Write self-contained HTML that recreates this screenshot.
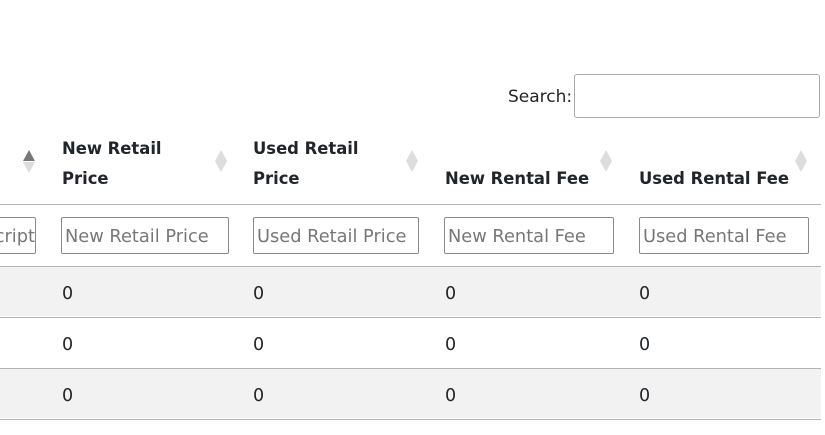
<!DOCTYPE html>
<html><head><meta charset="utf-8"><style>
body{margin:0;width:825px;height:435px;background:#fff;position:relative;overflow:hidden;font-family:"DejaVu Sans","Liberation Sans",sans-serif;color:#212529}
.a{position:absolute}
.lbl{left:508px;top:87px;font-size:17px}
.sbox{left:574px;top:74px;width:244px;height:42px;border:1px solid #aaa;border-radius:3px}
.h{font-weight:bold;font-size:16.4px;line-height:30px}
.line{left:0;width:821px;height:1px;background:#b4b4b4}
.row{left:0;width:821px;height:50px;background:#f2f2f2}
.inp{top:217px;border:1px solid #8a8a8a;border-radius:2px;font-size:17.8px;color:#777;line-height:37px;padding-left:3px;box-sizing:border-box;height:37px;overflow:hidden;white-space:nowrap}
.z{font-size:17.5px}
</style></head><body>
<div class="a lbl">Search:</div>
<div class="a sbox"></div>

<div class="a h" style="left:62px;top:134px">New Retail<br>Price</div>
<div class="a h" style="left:253px;top:134px">Used Retail<br>Price</div>
<div class="a h" style="left:445px;top:164px">New Rental Fee</div>
<div class="a h" style="left:639px;top:164px">Used Rental Fee</div>

<svg class="a" style="left:0;top:0" width="825" height="435">
<polygon points="29,150 35,161 23,161" fill="#777"/>
<polygon points="23,162 35,162 29,173" fill="#ddd"/>
<g fill="#ddd">
<polygon points="221,150 227,161 221,172 215,161"/>
<polygon points="412,150 418,161 412,172 406,161"/>
<polygon points="606,150 612,161 606,172 600,161"/>
<polygon points="801,150 807,161 801,172 795,161"/>
</g>
</svg>

<div class="a line" style="top:204px"></div>
<div class="a inp" style="left:-10px;width:46px;padding-left:0;text-align:right">cript</div>
<div class="a inp" style="left:61px;width:168px">New Retail Price</div>
<div class="a inp" style="left:253px;width:166px">Used Retail Price</div>
<div class="a inp" style="left:444px;width:170px">New Rental Fee</div>
<div class="a inp" style="left:639px;width:170px">Used Rental Fee</div>

<div class="a row" style="top:266px"></div>
<div class="a row" style="top:368px"></div>
<div class="a line" style="top:266px"></div>
<div class="a line" style="top:317px"></div>
<div class="a line" style="top:368px"></div>
<div class="a line" style="top:419px"></div>

<div class="a z" style="left:62px;top:284px">0</div><div class="a z" style="left:253px;top:284px">0</div><div class="a z" style="left:445px;top:284px">0</div><div class="a z" style="left:639px;top:284px">0</div>
<div class="a z" style="left:62px;top:335px">0</div><div class="a z" style="left:253px;top:335px">0</div><div class="a z" style="left:445px;top:335px">0</div><div class="a z" style="left:639px;top:335px">0</div>
<div class="a z" style="left:62px;top:386px">0</div><div class="a z" style="left:253px;top:386px">0</div><div class="a z" style="left:445px;top:386px">0</div><div class="a z" style="left:639px;top:386px">0</div>
</body></html>
